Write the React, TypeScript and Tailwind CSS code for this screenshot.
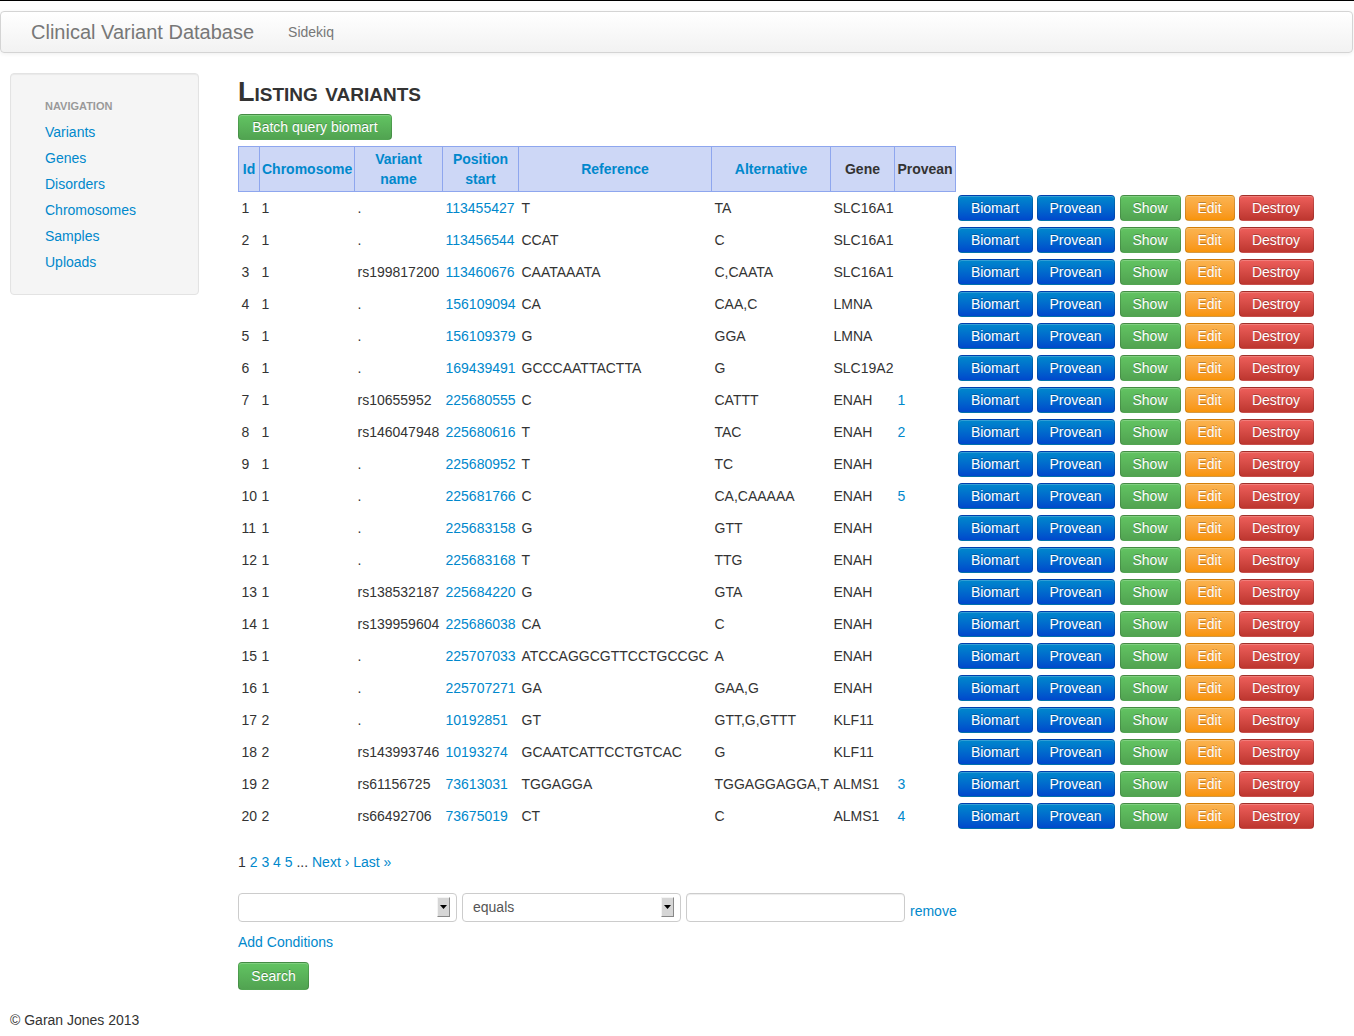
import React from "react";

type Variant = {
  id: number;
  chrom: string;
  name: string;
  pos: string;
  ref: string;
  alt: string;
  gene: string;
  provean?: string;
};

const variants: Variant[] = [
  { id: 1, chrom: "1", name: ".", pos: "113455427", ref: "T", alt: "TA", gene: "SLC16A1" },
  { id: 2, chrom: "1", name: ".", pos: "113456544", ref: "CCAT", alt: "C", gene: "SLC16A1" },
  { id: 3, chrom: "1", name: "rs199817200", pos: "113460676", ref: "CAATAAATA", alt: "C,CAATA", gene: "SLC16A1" },
  { id: 4, chrom: "1", name: ".", pos: "156109094", ref: "CA", alt: "CAA,C", gene: "LMNA" },
  { id: 5, chrom: "1", name: ".", pos: "156109379", ref: "G", alt: "GGA", gene: "LMNA" },
  { id: 6, chrom: "1", name: ".", pos: "169439491", ref: "GCCCAATTACTTA", alt: "G", gene: "SLC19A2" },
  { id: 7, chrom: "1", name: "rs10655952", pos: "225680555", ref: "C", alt: "CATTT", gene: "ENAH", provean: "1" },
  { id: 8, chrom: "1", name: "rs146047948", pos: "225680616", ref: "T", alt: "TAC", gene: "ENAH", provean: "2" },
  { id: 9, chrom: "1", name: ".", pos: "225680952", ref: "T", alt: "TC", gene: "ENAH" },
  { id: 10, chrom: "1", name: ".", pos: "225681766", ref: "C", alt: "CA,CAAAAA", gene: "ENAH", provean: "5" },
  { id: 11, chrom: "1", name: ".", pos: "225683158", ref: "G", alt: "GTT", gene: "ENAH" },
  { id: 12, chrom: "1", name: ".", pos: "225683168", ref: "T", alt: "TTG", gene: "ENAH" },
  { id: 13, chrom: "1", name: "rs138532187", pos: "225684220", ref: "G", alt: "GTA", gene: "ENAH" },
  { id: 14, chrom: "1", name: "rs139959604", pos: "225686038", ref: "CA", alt: "C", gene: "ENAH" },
  { id: 15, chrom: "1", name: ".", pos: "225707033", ref: "ATCCAGGCGTTCCTGCCGC", alt: "A", gene: "ENAH" },
  { id: 16, chrom: "1", name: ".", pos: "225707271", ref: "GA", alt: "GAA,G", gene: "ENAH" },
  { id: 17, chrom: "2", name: ".", pos: "10192851", ref: "GT", alt: "GTT,G,GTTT", gene: "KLF11" },
  { id: 18, chrom: "2", name: "rs143993746", pos: "10193274", ref: "GCAATCATTCCTGTCAC", alt: "G", gene: "KLF11" },
  { id: 19, chrom: "2", name: "rs61156725", pos: "73613031", ref: "TGGAGGA", alt: "TGGAGGAGGA,T", gene: "ALMS1", provean: "3" },
  { id: 20, chrom: "2", name: "rs66492706", pos: "73675019", ref: "CT", alt: "C", gene: "ALMS1", provean: "4" },
];

const navItems = ["Variants", "Genes", "Disorders", "Chromosomes", "Samples", "Uploads"];

const btnBase =
  "inline-flex h-[26px] items-center justify-center rounded-[4px] border border-black/15 text-[14px] leading-5 text-white [text-shadow:0_-1px_0_rgba(0,0,0,0.25)] shadow-[inset_0_1px_0_rgba(255,255,255,0.2)]";
const btnPrimary = "bg-linear-to-b from-[#0088cc] to-[#0048cc]";
const btnSuccess = "bg-linear-to-b from-[#62c462] to-[#51a351]";
const btnWarning = "bg-linear-to-b from-[#fbb450] to-[#f89406]";
const btnDanger = "bg-linear-to-b from-[#ee5f5b] to-[#bd362f]";

function SelectArrow() {
  return (
    <div className="flex h-[20px] w-[13px] items-center justify-center border border-t-[#f4f4f4] border-l-[#f4f4f4] border-r-[#888] border-b-[#888] bg-[#d6d6d6]">
      <svg width="7" height="4" viewBox="0 0 7 4">
        <path d="M0 0h7L3.5 4z" fill="#000" />
      </svg>
    </div>
  );
}

function Th({ children, link = true, w }: { children: React.ReactNode; link?: boolean; w: string }) {
  return (
    <th
      className={`${w} overflow-visible border border-[#8ea6ee] px-[2px] py-[2px] text-center align-middle font-bold leading-5 whitespace-nowrap ${
        link ? "text-[#0088cc]" : "text-[#333]"
      }`}
    >
      {children}
    </th>
  );
}

export default function App() {
  return (
    <div className="min-h-[1036px] w-[1354px] border-t border-black bg-white font-['Liberation_Sans',Arial,sans-serif] text-[14px] leading-5 text-[#333]">
      <div className="mt-[10px] flex h-[42px] w-[1353px] items-center rounded-[4px] border border-[#d4d4d4] bg-linear-to-b from-white to-[#f2f2f2] shadow-[0_1px_4px_rgba(0,0,0,0.065)]">
        <span className="ml-[30px] text-[20px] text-[#777]">Clinical Variant Database</span>
        <span className="ml-[34px] text-[14px] text-[#777]">Sidekiq</span>
      </div>

      <div className="mt-[20px] flex">
        <div className="ml-[10px] w-[189px] self-start rounded-[4px] border border-[#e3e3e3] bg-[#f5f5f5] py-[19px] pl-[34px] shadow-[inset_0_1px_1px_rgba(0,0,0,0.05)]">
          <div className="py-[3px] text-[11px] font-bold uppercase leading-5 text-[#999] [text-shadow:0_1px_0_rgba(255,255,255,0.5)]">
            Navigation
          </div>
          {navItems.map((item) => (
            <div key={item} className="py-[3px] text-[#0088cc]">
              {item}
            </div>
          ))}
        </div>

        <div className="ml-[39px] flex flex-col">
          <h1 className="mt-[4px] text-[27px] font-bold leading-[30px] text-[#333] [font-variant:small-caps]">
            Listing variants
          </h1>
          <div className="mt-[7px]">
            <button className={`${btnBase} ${btnSuccess} w-[154px]`}>Batch query biomart</button>
          </div>

          <table className="mt-[6px] w-[1079px] table-fixed border-collapse">
            <thead>
              <tr className="bg-[#cdd7f6]">
                <Th w="w-[21px]">Id</Th>
                <Th w="w-[95px]">Chromosome</Th>
                <Th w="w-[88px]">
                  Variant
                  <br />
                  name
                </Th>
                <Th w="w-[76px]">
                  Position
                  <br />
                  start
                </Th>
                <Th w="w-[193px]">Reference</Th>
                <Th w="w-[119px]">Alternative</Th>
                <Th w="w-[64px]" link={false}>
                  Gene
                </Th>
                <Th w="w-[61px]" link={false}>
                  Provean
                </Th>
              </tr>
            </thead>
            <tbody>
              {variants.map((v) => (
                <tr key={v.id} className="h-[32px]">
                  <td className="px-[3px] align-middle whitespace-nowrap">{v.id}</td>
                  <td className="px-[2px] align-middle">{v.chrom}</td>
                  <td className="px-[3px] align-middle whitespace-nowrap">{v.name}</td>
                  <td className="px-[3px] align-middle text-[#0088cc]">{v.pos}</td>
                  <td className="px-[3px] align-middle whitespace-nowrap">{v.ref}</td>
                  <td className="px-[3px] align-middle whitespace-nowrap">{v.alt}</td>
                  <td className="px-[3px] align-middle">{v.gene}</td>
                  <td className="px-[3px] align-middle text-[#0088cc]">{v.provean ?? ""}</td>
                  <td className="py-[3px] pl-[2px] align-middle">
                    <div className="flex gap-[4px]">
                      <button className={`${btnBase} ${btnPrimary} w-[75px]`}>Biomart</button>
                      <button className={`${btnBase} ${btnPrimary} w-[78px]`}>Provean</button>
                      <button className={`${btnBase} ${btnSuccess} ml-[1px] w-[61px]`}>Show</button>
                      <button className={`${btnBase} ${btnWarning} w-[50px]`}>Edit</button>
                      <button className={`${btnBase} ${btnDanger} w-[75px]`}>Destroy</button>
                    </div>
                  </td>
                </tr>
              ))}
            </tbody>
          </table>

          <div className="mt-[20px] whitespace-pre">
            <span>1 </span>
            <span className="text-[#0088cc]">2</span> <span className="text-[#0088cc]">3</span>{" "}
            <span className="text-[#0088cc]">4</span> <span className="text-[#0088cc]">5</span>
            <span> ... </span>
            <span className="text-[#0088cc]">Next ›</span> <span className="text-[#0088cc]">Last »</span>
          </div>

          <div className="mt-[21px] flex items-end gap-[5px]">
            <div className="flex h-[29px] w-[219px] items-center justify-end rounded-[4px] border border-[#ccc] pr-[6px]">
              <SelectArrow />
            </div>
            <div className="flex h-[29px] w-[219px] items-center justify-between rounded-[4px] border border-[#ccc] pl-[10px] pr-[6px] text-[#555]">
              <span>equals</span>
              <SelectArrow />
            </div>
            <div className="h-[29px] w-[219px] rounded-[4px] border border-[#ccc] shadow-[inset_0_1px_1px_rgba(0,0,0,0.075)]" />
            <span className="mb-[1px] text-[#0088cc]">remove</span>
          </div>

          <div className="mt-[10px] text-[#0088cc]">Add Conditions</div>

          <div className="mt-[10px]">
            <button className={`${btnBase} ${btnSuccess} h-[28px] w-[71px]`}>Search</button>
          </div>
        </div>
      </div>

      <div className="ml-[10px] mt-[20px] text-[#333]">© Garan Jones 2013</div>
    </div>
  );
}
